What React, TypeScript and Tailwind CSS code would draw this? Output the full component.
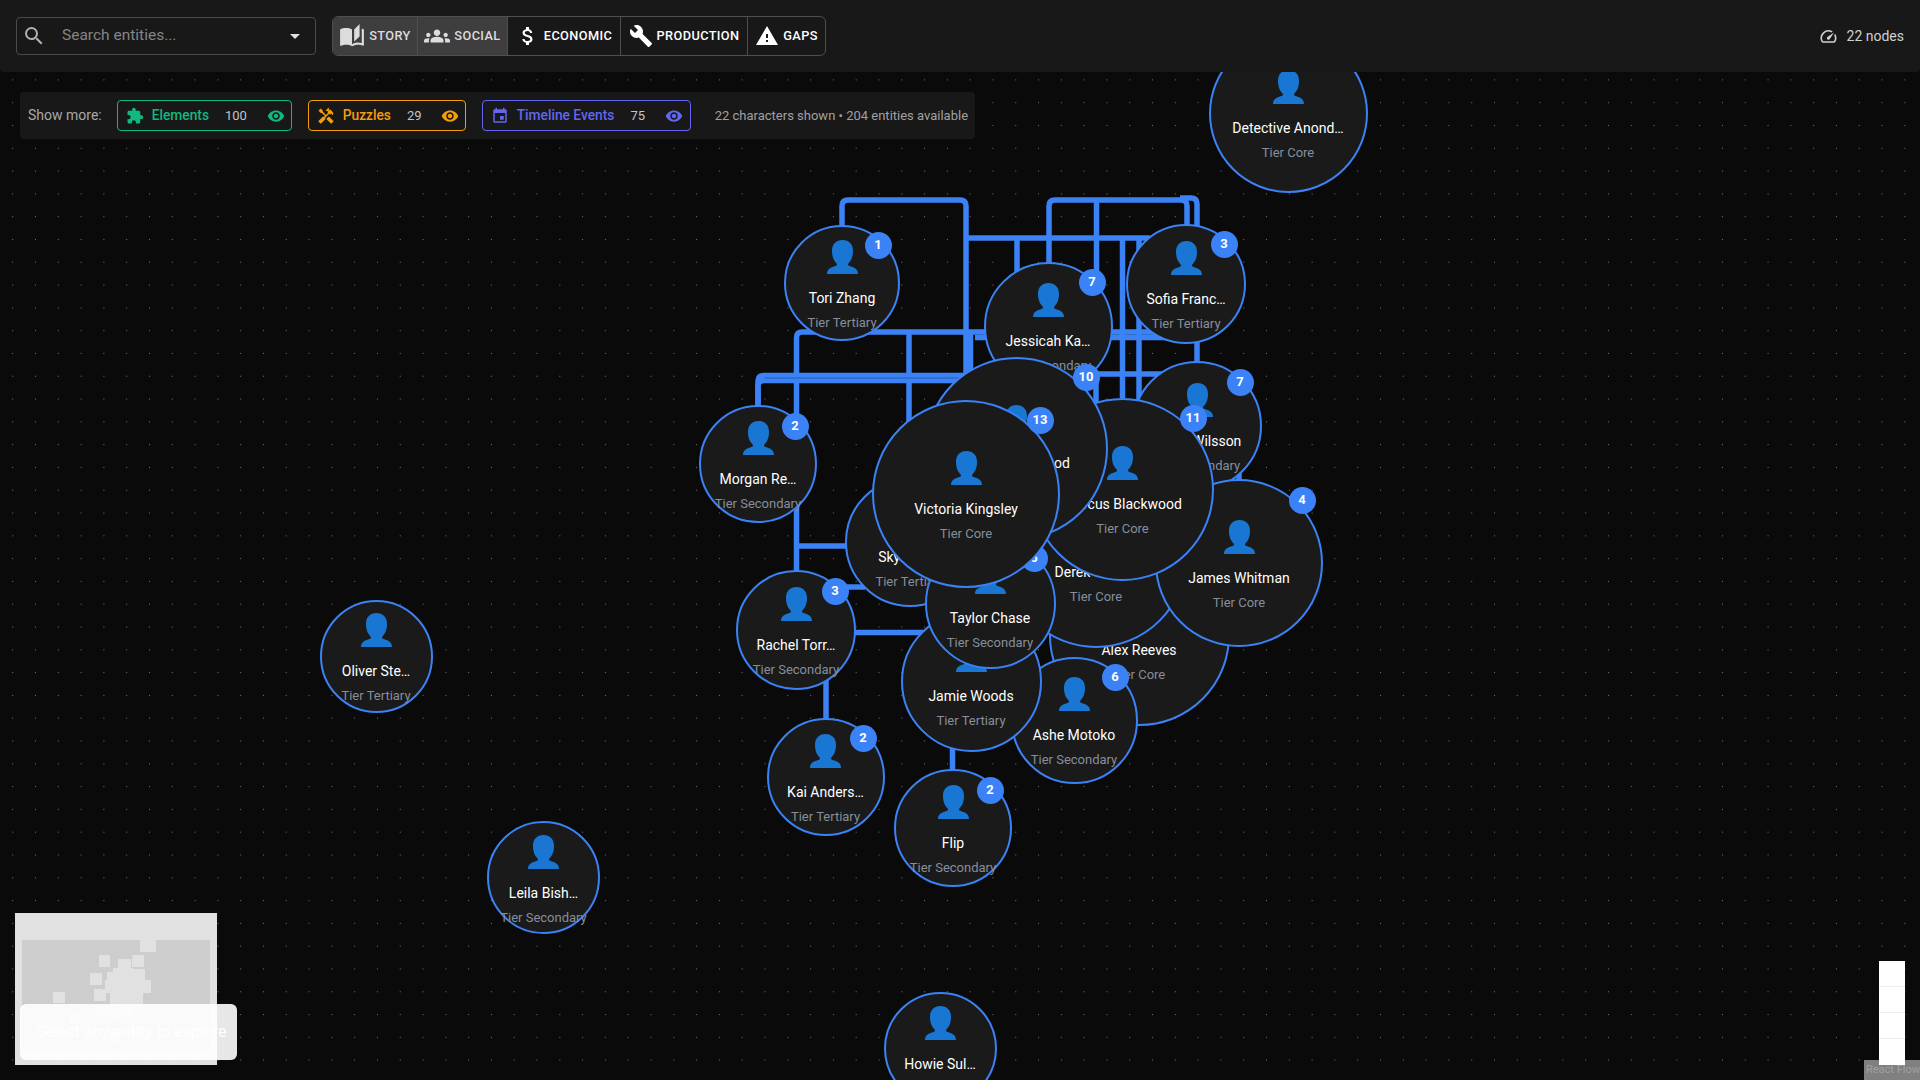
import React from "react";
import {
  MdSearch, MdArrowDropDown, MdAutoStories, MdGroups, MdAttachMoney, MdBuild, MdWarning,
  MdSpeed, MdExtension, MdHandyman, MdEvent, MdVisibility,
} from "react-icons/md";

type N = { n: string; t: string; x: number; y: number; d: number; b?: [string, number, number] };

const nodes: N[] = [
  { n: "Diego Wilsson", t: "Secondary", x: 1197, y: 426, d: 130, b: ["7", 1240, 382] },
  { n: "Jessicah Ka…", t: "Secondary", x: 1048, y: 326, d: 129, b: ["7", 1092, 282] },
  { n: "Tori Zhang", t: "Tertiary", x: 842, y: 283, d: 116, b: ["1", 878, 245] },
  { n: "Sofia Franc…", t: "Tertiary", x: 1186, y: 284, d: 120, b: ["3", 1224, 244] },
  { n: "Detective Anond…", t: "Core", x: 1288, y: 113, d: 159 },
  { n: "Morgan Re…", t: "Secondary", x: 758, y: 464, d: 118, b: ["2", 795, 426] },
  { n: "Oliver Ste…", t: "Tertiary", x: 376, y: 656, d: 113 },
  { n: "Leila Bish…", t: "Secondary", x: 543.5, y: 877.5, d: 113 },
  { n: "Howie Sul…", t: "Tertiary", x: 940, y: 1048.5, d: 113 },
  { n: "Kai Anders…", t: "Tertiary", x: 825.5, y: 777, d: 118, b: ["2", 863, 738] },
  { n: "Flip", t: "Secondary", x: 953, y: 828, d: 118, b: ["2", 990, 790] },
  { n: "Skyler Iyer", t: "Tertiary", x: 910, y: 542, d: 130 },
  { n: "Rachel Torr…", t: "Secondary", x: 796, y: 630, d: 120, b: ["3", 835, 591] },
  { n: "Alex Reeves", t: "Core", x: 1139, y: 635, d: 181 },
  { n: "Ashe Motoko", t: "Secondary", x: 1074, y: 720, d: 127, b: ["6", 1115, 677] },
  { n: "Derek Thorne", t: "Core", x: 1096, y: 557, d: 182 },
  { n: "James Whitman", t: "Core", x: 1239, y: 563, d: 168, b: ["4", 1302, 500] },
  { n: "Marcus Blackwood", t: "Core", x: 1122.5, y: 489, d: 183, b: ["11", 1193, 418] },
  { n: "Jamie Woods", t: "Tertiary", x: 971, y: 681, d: 141 },
  { n: "Taylor Chase", t: "Secondary", x: 990, y: 603, d: 131, b: ["5", 1034, 558] },
  { n: "Sarah Blackwood", t: "Core", x: 1016, y: 448, d: 183, b: ["10", 1086, 377] },
  { n: "Victoria Kingsley", t: "Core", x: 966, y: 494, d: 188, b: ["13", 1040, 420] },
];

function Bust() {
  return (
    <svg viewBox="0 0 31 34" className="h-[34px] w-[31px] shrink-0" fill="#1976d2">
      <path d="M15.5 0C22 0 26 4 26 11C26 17 24 21 21 24C21 25.5 22 26 24 26.5C28 27.5 31 29.5 31 34H0C0 29.5 3 27.5 7 26.5C9 26 10 25.5 10 24C7 21 5 17 5 11C5 4 9 0 15.5 0Z" />
    </svg>
  );
}

function Node({ n }: { n: N }) {
  return (
    <div
      className="absolute box-border flex flex-col items-center justify-center whitespace-nowrap rounded-full border-2 border-[#3b82f6] bg-[#1a1a1a] pt-[5px]"
      style={{ left: n.x - n.d / 2, top: n.y - n.d / 2, width: n.d, height: n.d }}
    >
      <Bust />
      <div className="mt-[14px] text-[14px] leading-[20px] text-white">{n.n}</div>
      <div className="mt-[7px] text-[13px] leading-[16px] text-[#868e9c]">Tier {n.t}</div>
      {n.b && (
        <div
          className="absolute flex h-[27px] w-[27px] items-center justify-center rounded-full bg-[#3b82f6] text-[13px] font-bold text-white"
          style={{ left: n.b[1] - (n.x - n.d / 2) - 13.5 - 2, top: n.b[2] - (n.y - n.d / 2) - 13.5 - 2 }}
        >
          {n.b[0]}
        </div>
      )}
    </div>
  );
}

function Edges() {
  const thin = [
    "M842 230V206Q842 200 848 200H960Q966 200 966 206V420",
    "M970.5 333V400",
    "M1049 270V206Q1049 200 1055 200H1181Q1187 200 1187 206V230",
    "M1197 372V204Q1197 198 1191 198H1180",
    "M1096.5 200V300",
    "M966 238H1150",
    "M1139 238V402",
    "M1017 238V300",
    "M1122.5 238V398",
    "M796.5 590V338Q796.5 332 802 332H1197",
    "M975 337.5H1197",
    "M758 410V381Q758 375.5 764 375.5H1020",
    "M758 410V386Q758 380.5 764 380.5H1020",
    "M1090 374H1175",
    "M909 333V490",
    "M1096 374V402",
    "M796 546H850",
    "M830 587H865",
    "M850 632.5H930",
    "M826 680V720",
    "M952.5 745V770",
    "M1239 470V484",
  ];
  return (
    <svg className="absolute left-0 top-0 h-[1080px] w-[1920px]" viewBox="0 0 1920 1080" fill="none">
      {thin.map((d) => (
        <path key={d} d={d} stroke="#3b82f6" strokeWidth={5.5} />
      ))}
      <path d="M764 378H1020" stroke="#2c5da8" strokeWidth={1} />
    </svg>
  );
}

function MiniMap() {
  const sq = [
    [140, 937, 16, 15], [99, 955, 11, 12], [132, 955, 12, 12], [118, 959, 13, 13], [90, 973, 12, 12],
    [133, 969, 12, 12], [113, 968, 20, 20], [107, 972, 20, 20], [105, 980, 46, 13], [110, 993, 33, 13],
    [94, 989, 12, 12], [53, 992, 12, 11], [97, 1005, 12, 10], [110, 1008, 10, 10], [120, 1003, 13, 12],
    [70, 1014, 10, 10], [108, 1032, 12, 10],
  ];
  return (
    <svg className="absolute left-[15px] top-[913px] h-[152px] w-[202px] opacity-[.88]" viewBox="15 913 202 152">
      <rect x="15" y="913" width="202" height="152" fill="#fff" />
      <rect x="22" y="940" width="188" height="110" fill="#e8e8e8" />
      {sq.map(([x, y, w, h]) => (
        <rect key={`${x}-${y}`} x={x} y={y} width={w} height={h} fill="#fff" />
      ))}
    </svg>
  );
}

function ToggleBtn({ icon, label, w, on, last }: { icon: React.ReactNode; label: string; w: string; on?: boolean; last?: boolean }) {
  return (
    <div
      className={`flex h-full items-center justify-center gap-[4px] ${w} ${on ? "bg-[#3e3e3e] text-[#dcdcdc]" : "text-white"} ${last ? "" : "border-r border-[#4f4f4f]"}`}
    >
      {icon}
      <span className="text-[12.75px] font-medium tracking-[0.4px]">{label}</span>
    </div>
  );
}

function Chip({ icon, label, count, cls, w, countMl, eyeMl }: { icon: React.ReactNode; label: string; count: string; cls: string; w: string; countMl: string; eyeMl: string }) {
  return (
    <div className={`flex h-[31px] items-center rounded border pl-[8px] ${cls} ${w}`}>
      {icon}
      <span className="ml-[8px] text-[13.75px] font-medium">{label}</span>
      <span className={`${countMl} text-[13px] text-[#c4c4c4]`}>{count}</span>
      <MdVisibility size={18} className={eyeMl} />
    </div>
  );
}

export default function App() {
  return (
    <div
      className="relative h-[1080px] w-[1920px] overflow-hidden bg-[#0a0a0a] bg-[radial-gradient(circle,#707070_0.55px,transparent_1px)] bg-[length:22.8px_22.8px] bg-[position:1.3px_0.1px]"
      style={{ fontFamily: "Roboto, sans-serif" }}
    >
      <Edges />
      {nodes.map((n) => (
        <Node key={n.n} n={n} />
      ))}

      <div className="absolute left-0 top-0 flex h-[72px] w-full items-center rounded-b bg-[#181818] pl-[16px] pr-[16px]">
        <div className="flex h-[38px] w-[300px] items-center rounded border border-[#4a4a4a] pl-[5px] pr-[8px]">
          <MdSearch size={24} className="text-[#b0b0b0]" />
          <span className="ml-[16px] flex-1 text-[15.5px] text-[#858585]">Search entities...</span>
          <MdArrowDropDown size={24} className="text-[#e0e0e0]" />
        </div>
        <div className="ml-[16px] flex h-[40px] overflow-hidden rounded-md border border-[#4f4f4f]">
          <ToggleBtn on w="w-[85px]" icon={<MdAutoStories size={26} />} label="STORY" />
          <ToggleBtn on w="w-[90px]" icon={<MdGroups size={26} />} label="SOCIAL" />
          <ToggleBtn w="w-[113px]" icon={<MdAttachMoney size={24} />} label="ECONOMIC" />
          <ToggleBtn w="w-[127px]" icon={<MdBuild size={24} />} label="PRODUCTION" />
          <ToggleBtn last w="w-[77px]" icon={<MdWarning size={24} />} label="GAPS" />
        </div>
        <div className="ml-auto flex items-center gap-[9px] text-[14px] text-[#d0d0d0]">
          <MdSpeed size={19} />
          <span>22 nodes</span>
        </div>
      </div>

      <div className="absolute left-[20px] top-[92px] flex h-[47px] w-[955px] items-center rounded bg-[#181818] pl-[8px]">
        <span className="mr-[15px] text-[14px] text-[#a8a8a8]">Show more:</span>
        <Chip w="w-[175px]" cls="border-[#10b981] text-[#10b981]" icon={<MdExtension size={18} />} label="Elements" count="100" countMl="ml-[16px]" eyeMl="ml-[20px]" />
        <div className="w-[16px]" />
        <Chip w="w-[158px]" cls="border-[#f59e0b] text-[#f59e0b]" icon={<MdHandyman size={18} />} label="Puzzles" count="29" countMl="ml-[16px]" eyeMl="ml-[19px]" />
        <div className="w-[16px]" />
        <Chip w="w-[209px]" cls="border-[#6366f1] text-[#6366f1]" icon={<MdEvent size={18} />} label="Timeline Events" count="75" countMl="ml-[16px]" eyeMl="ml-[20px]" />
        <span className="ml-[24px] text-[13px] text-[#a0a0a0]">22 characters shown • 204 entities available</span>
      </div>

      <MiniMap />
      <div className="absolute left-[20px] top-[1004px] flex h-[56px] w-[217px] items-center rounded-md bg-white/90 pl-[16px] text-[16px] text-white">
        Select any entity to explore
      </div>

      <div className="absolute right-0 bottom-0 flex h-[20px] w-[56px] items-center overflow-hidden whitespace-nowrap bg-[#808080] pl-[2px] text-[11px] text-[#a0a0a0]">
        React Flow
      </div>
      <div className="absolute left-[1879px] top-[961px] flex w-[26px] flex-col bg-white">
        <div className="h-[26px] border-b border-[#eee]" />
        <div className="h-[26px] border-b border-[#eee]" />
        <div className="h-[26px] border-b border-[#eee]" />
        <div className="h-[26px]" />
      </div>
    </div>
  );
}
